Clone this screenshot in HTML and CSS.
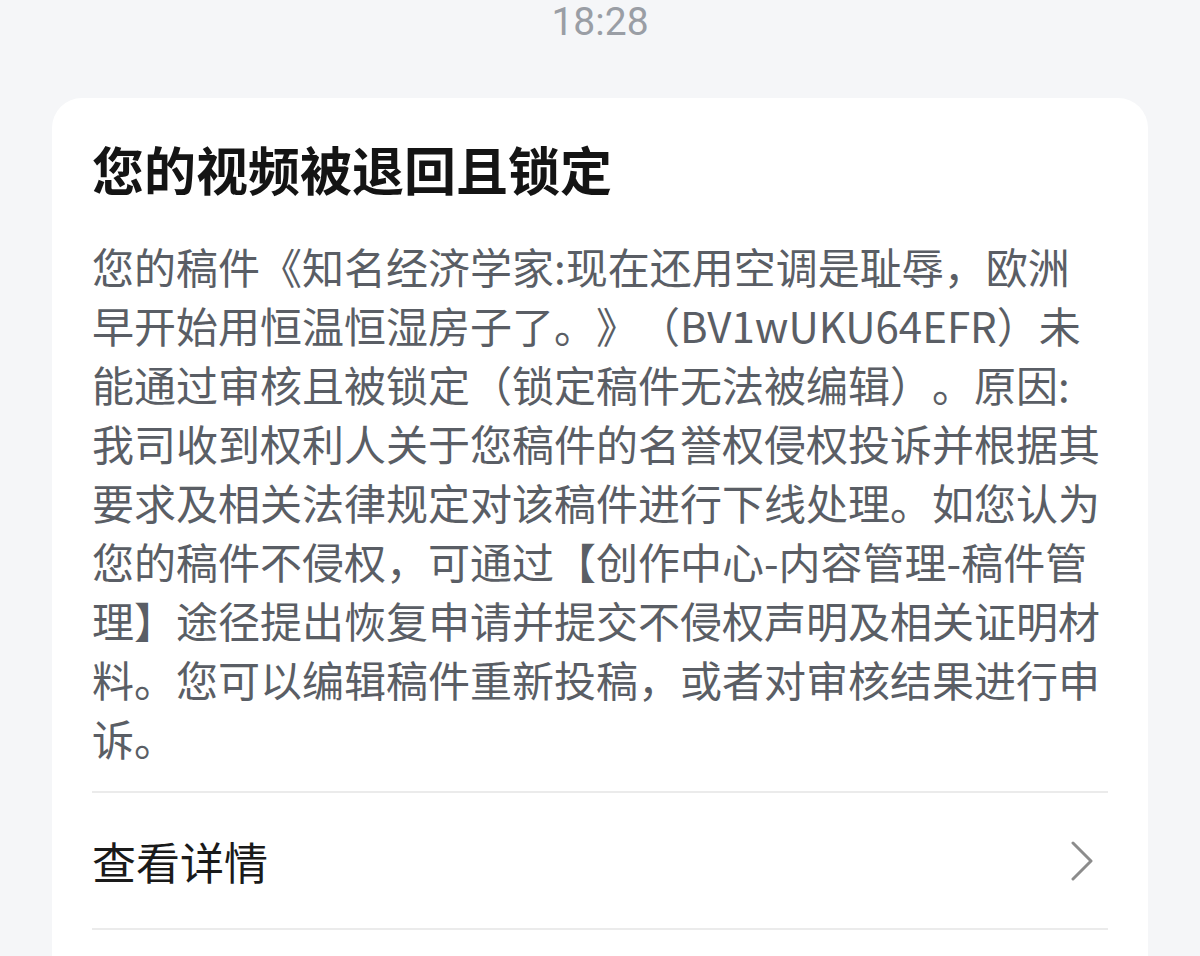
FILE: index.html
```html
<!DOCTYPE html>
<html lang="zh-CN">
<head>
    <meta charset="UTF-8">
    <meta name="viewport" content="width=device-width, initial-scale=1.0">
    <title>消息详情</title>
    <link rel="stylesheet" href="styles.css">
</head>
<body>

    <div class="status-bar">
        <span class="clock">18:28</span>
    </div>

    <div class="notice-card">
        <h1 class="notice-title">您的视频被退回且锁定</h1>
        <p class="notice-body">您的稿件《知名经济学家:现在还用空调是耻辱，欧洲<br>早开始用恒温恒湿房子了。》（BV1wUKU64EFR）未<br>能通过审核且被锁定（锁定稿件无法被编辑）。原因:<br>我司收到权利人关于您稿件的名誉权侵权投诉并根据其<br>要求及相关法律规定对该稿件进行下线处理。如您认为<br>您的稿件不侵权，可通过【创作中心-内容管理-稿件管<br>理】途径提出恢复申请并提交不侵权声明及相关证明材<br>料。您可以编辑稿件重新投稿，或者对审核结果进行申<br>诉。</p>

        <div class="notice-link">
            <span>查看详情</span>
            <svg class="chevron" width="22" height="40" viewBox="0 0 22 40">
                <polyline points="2,2 20,20 2,38" fill="none" stroke="#8c8c8c" stroke-width="3" stroke-linecap="round" stroke-linejoin="round"/>
            </svg>
        </div>
    </div>

</body>
</html>
```

FILE: styles.css
```css
body {
    margin: 0;
    background-color: #f5f6f8;
    font-family: "Noto Sans CJK SC", "Noto Sans", sans-serif;
    overflow: hidden;
}
.status-bar {
    height: 98px;
    text-align: center;
}
.clock {
    font-family: Roboto, "Noto Sans", sans-serif;
    font-size: 39px;
    line-height: 44px;
    color: #9a9ea5;
}
.notice-card {
    margin: 0 52px;
    padding: 41px 40px 60px;
    background: white;
    border-radius: 30px;
}
.notice-title {
    margin: 0;
    font-size: 52px;
    line-height: 60px;
    font-weight: bold;
    color: #141414;
}
.notice-body {
    margin: 37px 0 24px;
    font-size: 42px;
    line-height: 59px;
    color: #5a5e65;
    white-space: nowrap;
    text-spacing-trim: space-all;
}
.notice-link {
    display: flex;
    justify-content: space-between;
    align-items: center;
    height: 135px;
    border-top: 2px solid #ebebeb;
    border-bottom: 2px solid #ebebeb;
    font-size: 44px;
    color: #1a1a1a;
}
.chevron {
    margin-right: 15px;
}
```
